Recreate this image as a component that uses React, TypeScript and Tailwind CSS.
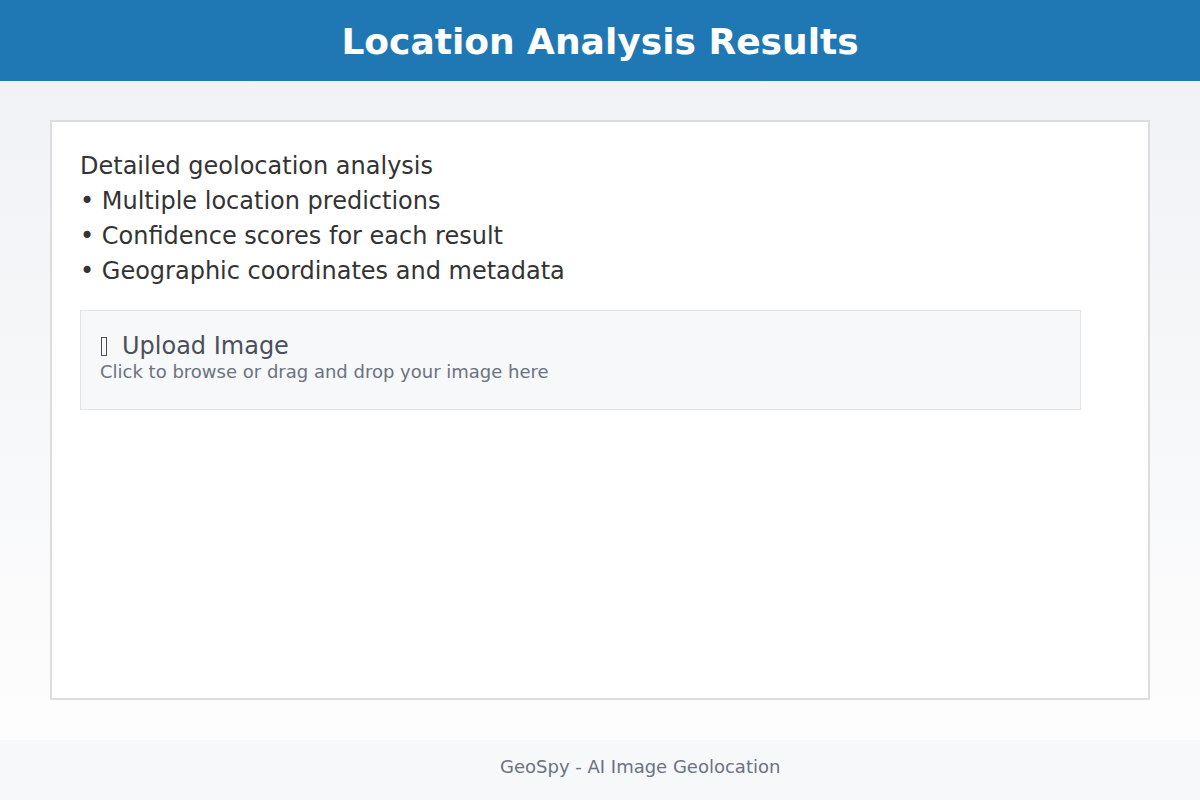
export default function App() {
  return (
    <div className="w-[1200px] h-[800px] flex flex-col" style={{ fontFamily: '"DejaVu Sans", sans-serif' }}>
      <header className="h-[81px] bg-[#1f78b4] flex items-center justify-center pt-[2px]">
        <h1 className="text-white font-bold text-[36px] leading-none">Location Analysis Results</h1>
      </header>
      <main className="flex-1 bg-gradient-to-b from-[#f1f2f6] to-[#fdfdfd] px-[50px] pt-[39px] pb-[40px]">
        <div className="h-full bg-white border-2 border-[#dddddd] pl-[28px] pt-[27px]">
          <div className="text-[24px] leading-[35px] text-[#333333]">
            <p>Detailed geolocation analysis</p>
            <p>• Multiple location predictions</p>
            <p>• Confidence scores for each result</p>
            <p>• Geographic coordinates and metadata</p>
          </div>
          <div className="mt-[21px] w-[1001px] h-[100px] bg-[#f7f8fa] border border-[#e1e4e8] pl-[19px] pt-[20px]">
            <p className="text-[24px] leading-[30px] text-[#4b5058] flex items-center">
              <span className="inline-block w-[6px] h-[19px] border border-[#4b5058] ml-[1px] mr-[15px]"></span>
              Upload Image
            </p>
            <p className="text-[18px] leading-[22px] text-[#6b7280]">Click to browse or drag and drop your image here</p>
          </div>
        </div>
      </main>
      <footer className="h-[60px] bg-[#f7f8fa] flex items-center pl-[500px] pb-[8px]">
        <span className="text-[18px] text-[#6b7280]">GeoSpy - AI Image Geolocation</span>
      </footer>
    </div>
  );
}
